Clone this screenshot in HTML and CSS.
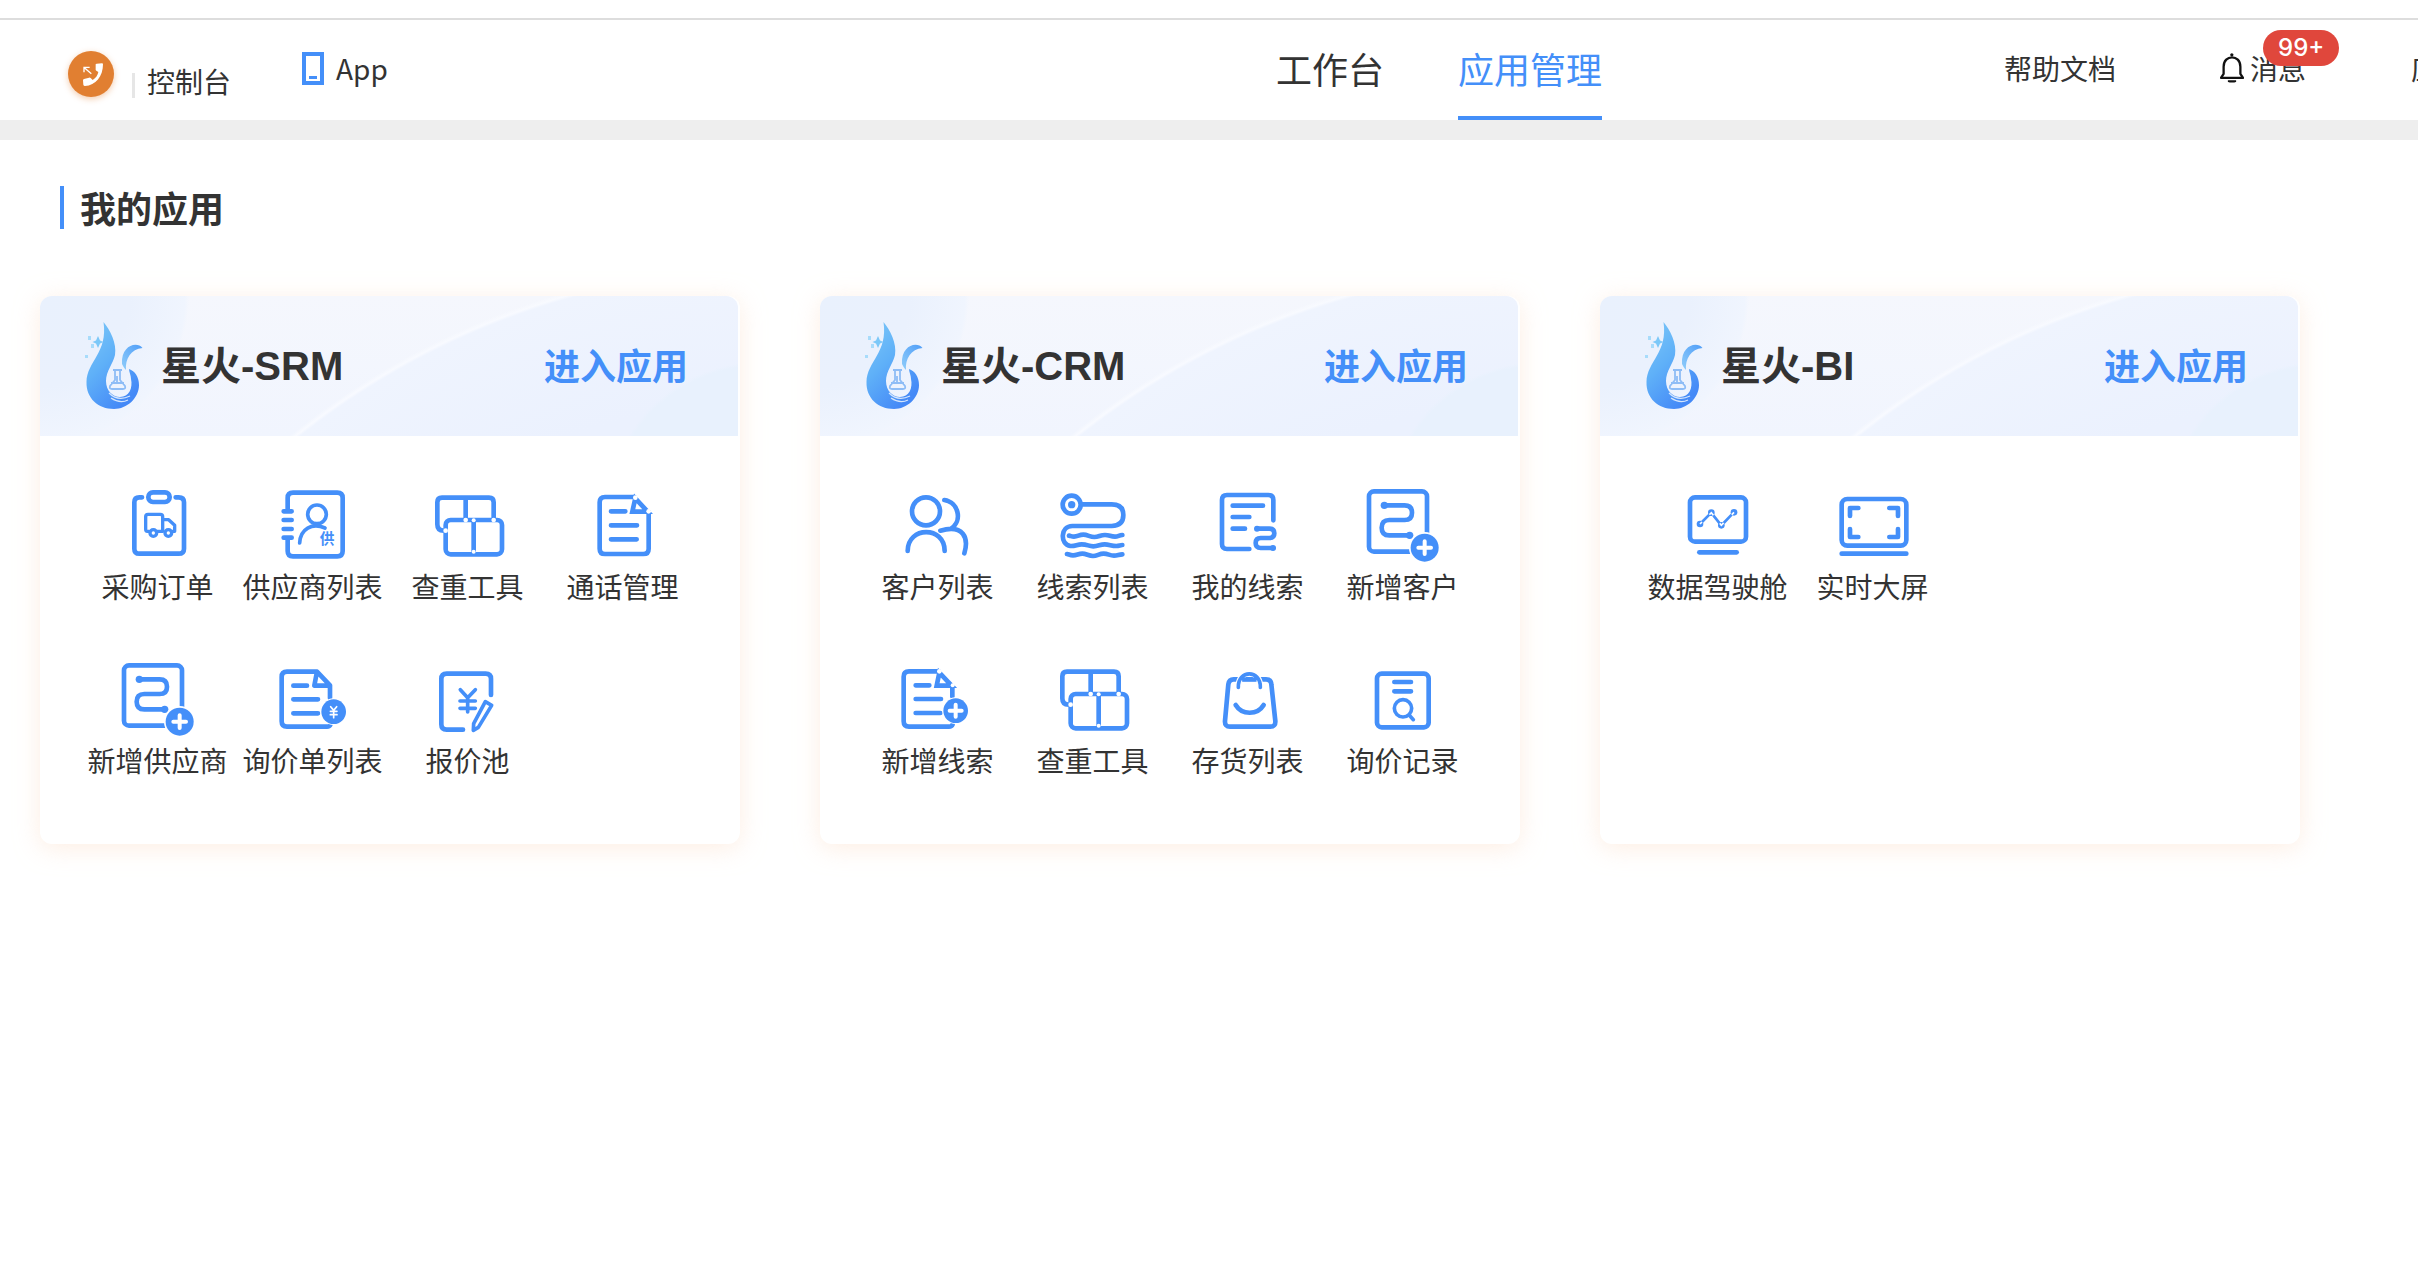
FILE: index.html
```html
<!DOCTYPE html>
<html lang="zh-CN">
<head>
<meta charset="utf-8">
<meta name="viewport" content="width=device-width, initial-scale=1">
<title>应用管理</title>
<link rel="stylesheet" href="styles.css">
</head>
<body>
<svg class="sprite" aria-hidden="true">
  <defs>
    <linearGradient id="flame-light" x1="0" y1="0" x2="0.6" y2="1">
      <stop offset="0" stop-color="#7cc8f8"/><stop offset="0.5" stop-color="#5fb0f8"/><stop offset="1" stop-color="#4489f7"/>
    </linearGradient>
    <linearGradient id="flame-curl" x1="1" y1="0" x2="0" y2="1">
      <stop offset="0" stop-color="#4f9df8"/><stop offset="1" stop-color="#8fcdfa"/>
    </linearGradient>
  </defs>
  <symbol id="flame" viewBox="82 320 64 92">
    <path fill="url(#flame-light)" d="M103.500 322C110 330 117 343 115 355C113 364 106 371 106 381C106 391 113 397 120 397C129 397 133 388 131 379C131 375 129 372 129 369C135 371 139 377 139 385C139 398 127 409 114 409C98 409 86 398 86.500 382C87 361 108 353 103.500 322Z"/>
    <path fill="url(#flame-curl)" d="M142.500 348C137 341 121 345 122 364C123 366 124 368 126 370C125 359 131 349 142.500 348Z"/>
    <path fill="#7cc8f8" d="M98 336l2 4.500 3.500 1.500-3.500 1.500-2 4.500-2-4.500-3.500-1.500 3.500-1.500z"/>
    <path fill="#a8dcfb" d="M88 336h3v4h-3zM91 344h3v4h-3zM85 355h3v3h-3z"/>
    <path fill="none" stroke="#8ebdf6" stroke-width="1.800" d="M113 370h9M115 371v9l-5 6q-1 3 2 3h11q3 0 2-3l-5-6v-9M111 383h13M117 376v7"/>
    <path fill="none" stroke="#d5e6fd" stroke-width="1.300" d="M109 393q9 9 21 3M111 398q9 6 17 2"/>
  </symbol>
  <symbol id="truck-order" viewBox="113 45 240 240">
    <g class="line"><path d="M185 82h-8q-15 0-15 15v139q0 15 15 15h118q16 0 16-15V97q0-15-16-15h-9"/><rect x="204" y="67" width="64" height="29" rx="14"/></g>
    <g class="line fine"><path d="M206 184h-5q-5 0-5-6v-38q0-7 7-7h37q7 0 7 7v44h-17M247 149h18l18 17v18h-7"/><circle cx="219" cy="189" r="10"/><circle cx="264" cy="189" r="10"/></g>
  </symbol>
  <symbol id="boxes" viewBox="113 45 240 240">
    <g class="line butt"><path d="M160 182q-19 0-19-19V97q0-14 14-14h141q14 0 14 14v50M226 83v65"/><rect x="166" y="150" width="169" height="103" rx="15"/><path d="M250 150v98"/></g>
    <g fill="#fff"><circle cx="226" cy="150" r="7"/><circle cx="250" cy="151" r="6"/><circle cx="310" cy="150" r="7"/><circle cx="166" cy="182" r="7"/><circle cx="250" cy="245" r="6"/></g>
  </symbol>
  <symbol id="doc" viewBox="578 45 240 240">
    <g class="line"><path d="M732 81H644q-16 0-16 16v139q0 16 16 16h115q16 0 16-16V126M662 124h43M662 166h78M662 208h77"/><path class="butt" d="M735 85l-9 40h46z"/></g>
    <g fill="#fff"><circle cx="735" cy="83" r="7"/><circle cx="775" cy="124" r="7"/></g>
  </symbol>
  <symbol id="route-add" viewBox="113 42 240 240">
    <g class="line"><rect x="131" y="61" width="174" height="181" rx="15"/><path d="M177 103h61q22 0 22 22t-22 22h-46q-23 0-23 23t23 23h61"/></g>
    <g class="solid"><circle cx="177" cy="103" r="11"/><circle cx="253" cy="193" r="11"/><circle cx="298" cy="230" r="45" fill="#fff" class="knock"/><circle cx="298" cy="230" r="42"/></g>
    <path class="plus" d="M279 230h38M298 211v38"/>
  </symbol>
  <symbol id="inquiry" viewBox="578 42 240 240">
    <g class="line"><path d="M749 160V121l-39-41H620q-16 0-16 16v133q0 16 16 16h120q8 0 10-5M710 80l-8 42h45M639 122h41M639 163h74M639 205h74"/></g>
    <circle cx="760" cy="200" r="40" fill="#fff"/><circle class="solid" cx="760" cy="200" r="37"/>
    <path class="plus thin" d="M751 185l9 11 9-11M760 196v22M750 199h20M750 209h20"/>
  </symbol>
  <symbol id="quote" viewBox="1043 42 240 240">
    <g class="line"><path d="M1232 150V102q0-16-16-16h-117q-16 0-16 16v136q0 16 16 16h49"/></g>
    <g class="line mid"><path d="M1140 134l22 24 23-24M1162 160v41M1139 168h46M1139 190h46M1215 170l19 11-40 66-15 9 1-20z"/></g>
  </symbol>
  <symbol id="people" viewBox="113 45 240 240">
    <g class="line"><circle cx="197" cy="124" r="42"/><path d="M142 243c0-75 111-76 111 0M252 90c42 6 56 62 20 86M240 182c70-20 86 22 72 68"/></g>
  </symbol>
  <symbol id="river" viewBox="578 45 240 240">
    <g class="line"><circle cx="634" cy="104" r="27"/><path d="M664 103h90q35 0 35 32t-35 33H636c-36 0-38 55-6 60 15 1 20-5 34-5 18 0 20 6 35 6s20-6 34-6 20 5 35 5c8 0 12-3 18-3M626 197c6 1 8 3 15 3 12 0 15-6 28-6s20 7 33 7 18-6 32-6 16 5 30 5c9 0 12-4 22-5M620 252c6 1 9 4 18 4 12 0 16-5 28-5s19 7 32 7 18-7 32-7 17 6 31 6c10 0 14-3 25-4"/></g>
    <circle class="solid" cx="634" cy="104" r="11"/>
  </symbol>
  <symbol id="my-leads" viewBox="113 45 240 240">
    <g class="line"><path d="M309 151V90q0-15-15-15H170q-15 0-15 15v132q0 15 15 15h67M187 107h91M187 141h50M187 176h37"/><path d="M260 176h37q15 0 15 14t-15 14h-26q-15 0-15 15t15 15h38"/></g>
    <g class="solid"><circle cx="260" cy="176" r="9"/><circle cx="308" cy="234" r="9"/></g>
  </symbol>
  <symbol id="doc-add" viewBox="113 42 240 240">
    <g class="line"><path d="M235 79H146q-16 0-16 16v134q0 16 16 16h120q8 0 11-7M276 155v-28M166 121h41M166 162h76M166 204h74"/><path class="butt" d="M237 83l-8 39h45z"/></g>
    <g fill="#fff"><circle cx="237" cy="79" r="7"/><circle cx="277" cy="121" r="6"/><circle cx="286" cy="197" r="40"/></g>
    <circle class="solid" cx="286" cy="197" r="37"/>
    <path class="plus" d="M268 197h36M286 179v36"/>
  </symbol>
  <symbol id="bag" viewBox="113 42 240 240">
    <g class="line"><path d="M190 103h97q15 0 16 15l12 110q1 17-15 17H179q-16 0-15-17l10-110q2-15 16-15z"/><path d="M196 180c19 31 65 31 84 0"/></g>
    <path d="M204 128c-2-57 68-57 66 0" fill="none" stroke="#fff" stroke-width="17"/>
    <g class="line mid"><path d="M204 127c-2-54 68-54 66 0M219 103h36"/></g>
  </symbol>
  <symbol id="record" viewBox="578 42 240 240">
    <g class="line"><rect x="620" y="86" width="155" height="161" rx="14"/><path d="M672 111h50M672 139h50"/></g>
    <g class="line mid"><circle cx="698" cy="190" r="26"/><path d="M717 211l12 13"/></g>
  </symbol>
  <symbol id="cockpit" viewBox="143 45 240 240">
    <g class="line"><rect x="179" y="82" width="168" height="133" rx="15"/><path d="M207 247h112"/></g>
    <g class="solid"><circle cx="209" cy="162" r="10"/><circle cx="243" cy="128" r="10"/><circle cx="273" cy="166" r="10"/><circle cx="311" cy="127" r="10"/></g>
    <path d="M209 162l34-34 30 38 38-39" fill="none" stroke="#fff" stroke-width="5"/>
    <path d="M215 156l22-22M249 136l19 24M280 159l24-25" fill="none" stroke="#448ff9" stroke-width="8"/>
  </symbol>
  <symbol id="big-screen" viewBox="608 45 240 240">
    <g class="line"><rect x="634" y="87" width="194" height="140" rx="17"/><path d="M634 251h194M684 114h-25v24M777 114h26v24M684 201h-25v-24M777 201h26v-24"/></g>
  </symbol>
</svg>

<header class="topbar">
  <div class="brand">
    <a class="brand-logo" href="#" aria-label="首页">
      <svg viewBox="204 153 138 138" aria-hidden="true"><path fill="#fff" d="M287 193q0-2 3-2l16-1q3 0 3 3c0 36-22 64-54 65q-4 0-5-4l-1-13q0-3 3-4l15-4q3-1 5 1l6 6c10-6 15-14 17-24l-6-4q-3-2-2-5z"/><path fill="none" stroke="#fff" stroke-width="4" d="M274 221l-21-18M252 217v-15h17"/></svg>
    </a>
    <a class="console" href="#">控制台</a>
    <a class="app-link" href="#">
      <svg viewBox="0 0 22 33" aria-hidden="true"><path fill="#448ff9" fill-rule="evenodd" d="M0 0h22v33H0zM4 4v25h14V4z"/><path fill="#448ff9" d="M7 24h8v3H7z"/></svg>
      App
    </a>
  </div>
  <nav class="tabs">
    <a href="#">工作台</a>
    <a class="active" href="#" aria-current="page">应用管理</a>
  </nav>
  <div class="tools">
    <a href="#">帮助文档</a>
    <a class="messages" href="#">
      <svg viewBox="720 159 73 90" aria-hidden="true"><g fill="none" stroke="#111" stroke-width="7" stroke-linejoin="round"><path d="M723 234l8-12v-22c0-38 51-38 51 0v22l8 12z"/></g><path fill="#111" d="M744 241h25v3q-2 4-6 4h-13q-4 0-6-4z"/><circle cx="756" cy="164" r="5" fill="#111"/></svg>
      消息
      <span class="badge">99+</span>
    </a>
    <a class="more" href="#">应用</a>
  </div>
</header>

<main>
  <h1>我的应用</h1>
  <div class="cards">
    <section class="card">
      <header><svg class="flame" aria-hidden="true"><use href="#flame"/></svg><h2>星火-SRM</h2><a class="enter" href="#">进入应用</a></header>
      <ul>
        <li><a href="#"><svg><use href="#truck-order"/></svg>采购订单</a></li>
        <li><a href="#">
          <svg viewBox="578 45 240 240">
            <g class="line"><path d="M622 121V84q0-16 16-16h133q16 0 16 16v159q0 16-16 16H638q-16 0-16-16v-37M610 124h24M610 150h24M610 177h24M610 203h24"/></g>
            <g class="line mid"><circle cx="710" cy="133" r="28"/><path d="M658 219c2-42 37-62 76-45"/></g>
            <text class="glyph" x="718" y="221">供</text>
          </svg>供应商列表</a></li>
        <li><a href="#"><svg><use href="#boxes"/></svg>查重工具</a></li>
        <li><a href="#"><svg><use href="#doc"/></svg>通话管理</a></li>
        <li><a href="#"><svg><use href="#route-add"/></svg>新增供应商</a></li>
        <li><a href="#"><svg><use href="#inquiry"/></svg>询价单列表</a></li>
        <li><a href="#"><svg><use href="#quote"/></svg>报价池</a></li>
      </ul>
    </section>
    <section class="card">
      <header><svg class="flame" aria-hidden="true"><use href="#flame"/></svg><h2>星火-CRM</h2><a class="enter" href="#">进入应用</a></header>
      <ul>
        <li><a href="#"><svg><use href="#people"/></svg>客户列表</a></li>
        <li><a href="#"><svg><use href="#river"/></svg>线索列表</a></li>
        <li><a href="#"><svg><use href="#my-leads"/></svg>我的线索</a></li>
        <li><a href="#"><svg><use href="#route-add"/></svg>新增客户</a></li>
        <li><a href="#"><svg><use href="#doc-add"/></svg>新增线索</a></li>
        <li><a href="#"><svg><use href="#boxes"/></svg>查重工具</a></li>
        <li><a href="#"><svg><use href="#bag"/></svg>存货列表</a></li>
        <li><a href="#"><svg><use href="#record"/></svg>询价记录</a></li>
      </ul>
    </section>
    <section class="card">
      <header><svg class="flame" aria-hidden="true"><use href="#flame"/></svg><h2>星火-BI</h2><a class="enter" href="#">进入应用</a></header>
      <ul>
        <li><a href="#"><svg><use href="#cockpit"/></svg>数据驾驶舱</a></li>
        <li><a href="#"><svg><use href="#big-screen"/></svg>实时大屏</a></li>
      </ul>
    </section>
  </div>
</main>
</body>
</html>
```
FILE: styles.css
```css
* { box-sizing: border-box; }

body {
  margin: 0;
  padding-top: 18px;
  background: #fff;
  color: #333;
  font: 28px/40px "Noto Sans CJK SC", sans-serif;
  overflow-x: hidden;
}

a { color: inherit; text-decoration: none; }
h1, h2, ul { margin: 0; padding: 0; }
ul { list-style: none; }
.sprite { position: absolute; width: 0; height: 0; }

/* Icon drawing styles */
.line { fill: none; stroke: #448ff9; stroke-width: 14; stroke-linecap: round; stroke-linejoin: round; }
.butt { stroke-linecap: butt; stroke-linejoin: miter; }
.mid { stroke-width: 11; }
.fine { stroke-width: 10; }
.solid { fill: #448ff9; }
.knock { stroke: #fff; stroke-width: 4; }
.plus { fill: none; stroke: #fff; stroke-width: 12; stroke-linecap: round; }
.thin { stroke-width: 5; }
.glyph { fill: #448ff9; font-size: 44px; font-weight: 700; }

/* Top bar */
.topbar {
  display: grid;
  grid-template-columns: 1fr auto 816px;
  height: 122px;
  border-top: 2px solid #ddd;
  border-bottom: 20px solid #eee;
}

.brand { display: flex; align-items: flex-start; padding: 28px 0 0 68px; }
.brand-logo {
  width: 46px;
  height: 46px;
  margin-top: 3px;
  border-radius: 50%;
  background: #e17f31;
  box-shadow: 0 2px 6px #e17f3166;
}
.brand-logo svg { display: block; width: 46px; height: 46px; }
.console {
  display: flex;
  align-items: center;
  gap: 12px;
  margin: 13px 0 0 18px;
}
.console::before { content: ""; width: 3px; height: 25px; margin-top: 8px; background: #e6e6e6; }
.app-link { display: flex; align-items: center; gap: 12px; margin-left: 71px; }
.app-link svg { width: 22px; height: 33px; }

.tabs { display: flex; gap: 74px; font-size: 36px; line-height: 96px; }
.tabs a { height: 100px; }
.tabs .active { color: #448ff9; border-bottom: 4px solid #448ff9; }

.tools {
  display: flex;
  padding: 28px 0 0 402px;
  overflow: hidden;
  white-space: nowrap;
}
.messages { position: relative; display: flex; align-items: center; align-self: flex-start; gap: 6px; margin-left: 104px; }
.messages svg { width: 24px; height: 30px; }
.badge {
  position: absolute;
  left: 43px;
  top: -18px;
  padding: 0 15px;
  border-radius: 18px;
  background: #e0473c;
  color: #fff;
  font: 500 24px/36px Inter, sans-serif;
}
.more { margin-left: 105px; }

/* Applications */
main { padding: 43px 40px 40px; }
h1 {
  display: flex;
  align-items: flex-start;
  gap: 16px;
  margin: 0 0 65px 20px;
  font-size: 36px;
  font-weight: 600;
  line-height: 48px;
}
h1::before { content: ""; width: 4px; height: 43px; margin-top: 3px; background: #448ff9; }

.cards { display: grid; grid-template-columns: repeat(auto-fill, 700px); gap: 80px; }
.card { border-radius: 12px; background: #fff; box-shadow: 0 4px 24px #fbe3d199; }

.card header {
  display: flex;
  align-items: center;
  height: 140px;
  margin-right: 2px;
  padding: 0 50px 0 42px;
  border-radius: 12px 12px 0 0;
  background:
    radial-gradient(circle at 720px 220px, #e8f1fd 0, #e8f1fd 150px, transparent 154px),
    radial-gradient(circle at 0 0, #e9f1fd 0, #eaf1fd 90px, #f0f5fe 145px, transparent 149px),
    radial-gradient(circle at 740px 745px, #eef1fe 0, #ebf1fe 640px, #eff4fe 772px, #f8faff 775px, transparent 779px),
    linear-gradient(#f5f7fd, #f1f5fe);
}
.flame { width: 64px; height: 92px; }
h2 { margin-left: 15px; font: 600 40px/56px "Liberation Sans", "Noto Sans CJK SC", sans-serif; }
.enter { margin-left: auto; padding-bottom: 4px; color: #448ff9; font-size: 36px; font-weight: 600; line-height: 56px; }

.card ul {
  display: grid;
  grid-template-columns: repeat(4, 1fr);
  row-gap: 52px;
  padding: 49px 40px 63px;
}
.card li a { display: flex; flex-direction: column; align-items: center; line-height: 42px; white-space: nowrap; }
.card li svg { width: 80px; height: 80px; }
```
